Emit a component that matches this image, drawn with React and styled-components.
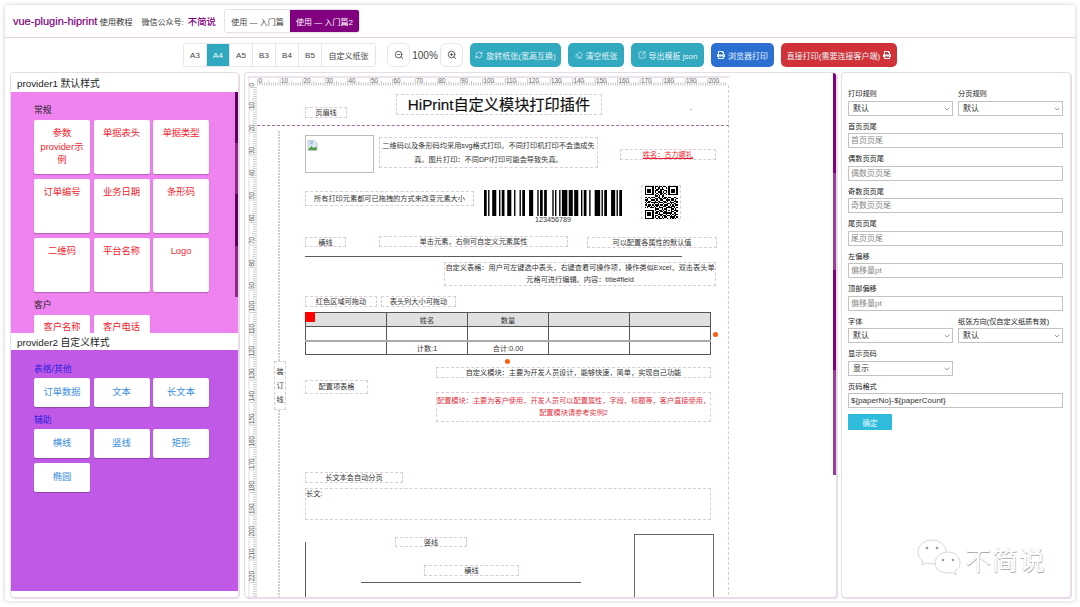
import styled, { createGlobalStyle, css } from "styled-components";
import { ZoomIn, ZoomOut, ChevronDown, SquareArrowOutUpRight, RefreshCw, Eraser } from "lucide-react";
import { FaPrint } from "react-icons/fa";

const FONT = `"Liberation Sans", "Noto Sans CJK SC", sans-serif`;
const PURPLE = "#800080";

const GlobalStyle = createGlobalStyle`
  html, body {
    margin: 0;
    background: #fff;
    font-family: ${FONT};
    color: #333;
  }
  * { box-sizing: border-box; }
`;

const Frame = styled.div`
  position: relative;
  width: 1070px;
  height: 596px;
  margin: 5px;
  background: #fff;
  border-radius: 4px;
  box-shadow: 0 0 4px rgba(0, 0, 0, 0.22);
  overflow: hidden;
`;

const Header = styled.header`
  height: 33px;
  display: flex;
  align-items: center;
  padding-left: 8px;
  border-bottom: 1px solid #e6cfe6;
  font-size: 8.3px;
`;

const Brand = styled.span`
  color: ${PURPLE};
  font-size: 11px;
  margin-right: 2px;
  -webkit-text-stroke: 0.2px ${PURPLE};
`;

const Account = styled.span`
  margin-left: 9px;
  font-size: 8px;
`;

const AccountName = styled.b`
  color: ${PURPLE};
  font-size: 9.4px;
  margin-left: 4px;
  font-weight: 500;
`;

const NavGroup = styled.div`
  display: flex;
  height: 24px;
  margin-left: 8px;
  border: 1px solid #e2e2e2;
  border-radius: 3px;
  overflow: hidden;
`;

const NavItem = styled.div`
  width: ${(p) => p.$w}px;
  display: flex;
  align-items: center;
  justify-content: center;
  font-size: 8px;
  color: ${(p) => (p.$active ? "#fff" : "#444")};
  background: ${(p) => (p.$active ? PURPLE : "#fff")};
`;

const Toolbar = styled.div`
  display: flex;
  align-items: center;
  height: 24px;
  margin-top: 5px;
  padding-left: 178px;
`;

const SizeGroup = styled.div`
  display: flex;
  height: 24px;
  border: 1px solid #e6e6e6;
  border-radius: 3px;
  margin-right: 11px;
`;

const SizeItem = styled.div`
  width: ${(p) => p.$w || 23}px;
  display: flex;
  align-items: center;
  justify-content: center;
  font-size: 8px;
  color: ${(p) => (p.$active ? "#fff" : "#444")};
  background: ${(p) => (p.$active ? "#2fa8c0" : "#fff")};
  border-right: 1px solid #e6e6e6;
  &:last-child { border-right: none; }
`;

const ZoomButton = styled.div`
  width: 23px;
  height: 24px;
  border: 1px solid #e6e6e6;
  border-radius: 6px;
  display: flex;
  align-items: center;
  justify-content: center;
  color: #444;
`;

const ZoomValue = styled.span`
  width: 30px;
  text-align: center;
  font-size: 10px;
  color: #444;
`;

const ActionButton = styled.div`
  width: ${(p) => p.$w}px;
  height: 24px;
  margin-left: 7px;
  border-radius: 5px;
  background: ${(p) => p.$bg};
  color: #e6f4f8;
  font-size: 8px;
  display: flex;
  align-items: center;
  justify-content: center;
  gap: 3px;
  white-space: nowrap;
`;

const Main = styled.main`
  display: flex;
  height: 524px;
  margin-top: 6px;
  padding-left: 6px;
`;

const panelFrame = css`
  height: 524px;
  border-radius: 3px;
  background: #fff;
  box-shadow: 0 0 0 1px #e4dee4, 1px 1px 0 1px #ecd9ee;
`;

const LeftPanel = styled.aside`
  ${panelFrame}
  width: 227px;
  display: flex;
  flex-direction: column;
  overflow: hidden;
  margin-right: 7px;
`;

const ProviderTitle = styled.div`
  height: ${(p) => p.$h}px;
  flex: none;
  display: flex;
  align-items: center;
  padding-left: 6px;
  font-size: 9.8px;
  color: #222;
  background: #fff;
`;

const ProviderBody = styled.div`
  position: relative;
  height: 241px;
  flex: none;
  overflow: hidden;
  padding: ${(p) => p.$top}px 0 0 23px;
  background: ${(p) => p.$bg};
`;

const PanelScroll = styled.div`
  position: absolute;
  top: 0;
  right: 0;
  width: 3px;
  height: 205px;
  background: linear-gradient(#5c005c 0 25%, #8a2a8a 25% 50%, #5c005c 50% 75%, #8a2a8a 75%);
`;

const GroupLabel = styled.div`
  height: 14px;
  line-height: 14px;
  font-size: 8.8px;
  color: ${(p) => p.$color};
  margin-bottom: ${(p) => p.$gap}px;
`;

const TileGrid = styled.div`
  display: grid;
  grid-template-columns: repeat(3, 56px);
  column-gap: 3.5px;
  row-gap: 5px;
  margin-bottom: 6px;
`;

const Tile = styled.div`
  height: ${(p) => p.$h}px;
  background: #fff;
  border-radius: 2px;
  box-shadow: 0 1px 1px rgba(0, 0, 0, 0.25);
  font-size: 9.3px;
  line-height: 13.6px;
  text-align: center;
  color: ${(p) => p.$color};
  padding: ${(p) => p.$pad}px 2px 0;
`;

const PanelFoot = styled.div`
  flex: 1;
  background: #fff;
`;

const CenterPanel = styled.section`
  ${panelFrame}
  position: relative;
  width: 591px;
  overflow: hidden;
  margin-right: 6px;
`;

const ScrollBar = styled.div`
  position: absolute;
  top: 0;
  right: 0;
  width: 3px;
  height: 402px;
  background: linear-gradient(${PURPLE} 0 25%, #96409a 25% 49%, ${PURPLE} 49% 74%, #96409a 74%);
`;

const RulerSvg = styled.svg`
  position: absolute;
  inset: 0;
  width: 591px;
  height: 524px;
`;

/* print elements sit on the paper by their own coordinates, given in page px */
const place = css`
  position: absolute;
  left: ${(p) => p.$x - 245}px;
  top: ${(p) => p.$y - 73}px;
  width: ${(p) => p.$w}px;
  height: ${(p) => p.$h}px;
`;

const PaperRight = styled.div`
  ${place}
  border-right: 1px dashed #d5c9d5;
`;

const HeaderLine = styled.div`
  ${place}
  border-top: 1px dashed #a06aa0;
`;

const BindLine = styled.div`
  ${place}
  background: repeating-linear-gradient(#cfcfcf 0 2px, #fff 2px 3px);
`;

const PrintItem = styled.div`
  ${place}
  border: 1px dashed #dccbdc;
  background: ${(p) => (p.$fill ? "#fff" : "transparent")};
  display: flex;
  flex-direction: column;
  align-items: ${(p) => (p.$start ? "flex-start" : "center")};
  justify-content: ${(p) => (p.$start ? "flex-start" : "center")};
  text-align: center;
  font-size: 7.2px;
  line-height: ${(p) => p.$lh || 9}px;
  white-space: nowrap;
  color: ${(p) => p.$color || "#333"};
  text-decoration: ${(p) => (p.$under ? "underline" : "none")};
`;

const PrintTitle = styled(PrintItem)`
  font-size: 15.2px;
  line-height: 20px;
  color: #111;
  -webkit-text-stroke: 0.2px #111;
`;

const ImageBox = styled.div`
  ${place}
  border: 1px solid #bbb;
  padding: 1px;
`;

const Solid = styled.div`
  ${place}
  background: #5c5c5c;
`;

const Outline = styled.div`
  ${place}
  border: 1px solid #666;
`;

const DrawBox = styled.svg`
  ${place}
`;

const BarLabel = styled.div`
  ${place}
  font-size: 7.2px;
  line-height: 8px;
  text-align: center;
  color: #333;
`;

const Dot = styled.i`
  ${place}
  border-radius: 50%;
  background: ${(p) => p.$bg};
`;

const GridTable = styled.table`
  ${place}
  border-collapse: collapse;
  table-layout: fixed;
  font-size: 7.2px;
  text-align: center;
  color: #333;
`;

const HeadCell = styled.th`
  height: 14px;
  padding: 0;
  font-weight: 400;
  background: #e0e0e0;
  border: 1px solid #555;
`;

const BodyCell = styled.td`
  height: 14px;
  padding: 0;
  border: 1px solid #555;
  border-top: ${(p) => (p.$split ? "2px solid #aaa" : "1px solid #555")};
`;

const DragHandle = styled.div`
  ${place}
  background: #f00;
`;

const RightPanel = styled.aside`
  ${panelFrame}
  width: 228px;
  padding: 15px 6px 0;
`;

const SettingsForm = styled.form`
  display: grid;
  grid-template-columns: 105px 105px;
  column-gap: 5px;
  row-gap: 5px;
`;

const Field = styled.label`
  display: block;
  grid-column: ${(p) => (p.$full ? "1 / -1" : "auto")};
`;

const FieldName = styled.div`
  height: 11px;
  line-height: 11px;
  margin-bottom: 1.5px;
  font-size: 7.2px;
  color: #222;
  white-space: nowrap;
`;

const controlStyle = css`
  display: block;
  width: 100%;
  height: 15px;
  border: 1px solid #c2c2c2;
  border-radius: 0;
  background: #fff;
  font-family: ${FONT};
  font-size: 8px;
  color: #333;
  outline: none;
`;

const TextInput = styled.input`
  ${controlStyle}
  padding: 0 2px;
  &::placeholder { color: #8a8a8a; opacity: 1; }
`;

const SelectWrap = styled.div`
  position: relative;
  svg {
    position: absolute;
    right: 2px;
    top: 4px;
    color: #666;
    pointer-events: none;
  }
`;

const Select = styled.select`
  ${controlStyle}
  appearance: none;
  padding: 0 0 0 4px;
`;

const SubmitButton = styled.button`
  grid-column: 1 / -1;
  width: 44px;
  height: 16px;
  margin-top: 1px;
  border: none;
  padding: 0;
  background: #2fbcdc;
  color: #e8fbff;
  font-family: ${FONT};
  font-size: 7.6px;
`;

const Watermark = styled.div`
  position: absolute;
  left: 912px;
  top: 534px;
  display: flex;
  align-items: center;
  gap: 2px;
`;

const WatermarkText = styled.span`
  font-size: 26px;
  letter-spacing: 1px;
  color: #fff;
  text-shadow: 0.5px 0.5px 0 #aeaeae, -0.3px -0.3px 0 #d0d0d0;
`;

const SIZES = ["A3", "A4", "A5", "B3", "B4", "B5"];

const COMMON = ["参数provider示例", "单据表头", "单据类型", "订单编号", "业务日期", "条形码", "二维码", "平台名称", "Logo"];

const TOP_TICKS = Array.from({ length: 209 }, (_, i) => i);
const LEFT_TICKS = Array.from({ length: 232 }, (_, i) => i);

function Ruler() {
  return (
    <RulerSvg viewBox="0 0 591 524">
      <rect x="3" y="3" width="481" height="2" fill="#ece4ec" />
      <rect x="3" y="5" width="2" height="519" fill="#f1ecf1" />
      {TOP_TICKS.map((i) => {
        const x = 12.7 + i * 2.25;
        const h = i % 10 === 0 ? 7 : i % 5 === 0 ? 4.5 : 3;
        return <line key={i} x1={x} x2={x} y1={12.5} y2={12.5 - h} stroke="#8c8c8c" strokeWidth="0.5" />;
      })}
      {TOP_TICKS.filter((i) => i % 10 === 0).map((i) => (
        <text key={i} x={13.4 + i * 2.25} y="9.5" fontSize="6.4" fill="#666" fontFamily={FONT}>
          {i}
        </text>
      ))}
      {LEFT_TICKS.map((i) => {
        const y = 14.5 + i * 2.25;
        const w = i % 10 === 0 ? 7 : i % 5 === 0 ? 5 : 4;
        return <line key={i} x1={12} x2={12 - w} y1={y} y2={y} stroke="#9a9a9a" strokeWidth="0.5" />;
      })}
      {LEFT_TICKS.filter((i) => i % 10 === 0 && i <= 220).map((i) => {
        const y = 13.6 + i * 2.25;
        return (
          <text key={i} x="0" y="0" transform={`translate(9 ${y}) rotate(-90)`} fontSize="6.4" fill="#666" fontFamily={FONT}>
            {i}
          </text>
        );
      })}
    </RulerSvg>
  );
}

// code 128 widths for 123456789
const BAR_WIDTHS = "211232" + "112232" + "131123" + "331121" + "241112" + "114131" + "321122" + "134111" + "2331112";

function Barcode() {
  let x = 0;
  const bars = [];
  BAR_WIDTHS.split("").forEach((c, i) => {
    const w = Number(c);
    if (i % 2 === 0) bars.push(<rect key={i} x={x} y="0" width={w} height="26" fill="#000" />);
    x += w;
  });
  return (
    <DrawBox $x={484} $y={190} $w={138} $h={26} viewBox={`0 0 ${x} 26`} preserveAspectRatio="none">
      {bars}
    </DrawBox>
  );
}

const QR_ROWS = [
  "1111111011011011001111111",
  "1000001010110100101000001",
  "1011101001101110001011101",
  "1011101011001001101011101",
  "1011101010111010101011101",
  "1000001001001101001000001",
  "1111111010101010101111111",
  "0000000011010110000000000",
  "1101011100110101101100110",
  "0010100011011011010011001",
  "1110011101001100111011010",
  "0101100010110011010100111",
  "1011011111011101100111001",
  "0100000100100010011010110",
  "1101101011101101110101011",
  "0011010101010011001011100",
  "1010111010011100111110101",
  "0000000011100101100011010",
  "1111111010011010101010111",
  "1000001001101101100011001",
  "1011101011010011111110110",
  "1011101000111100100101011",
  "1011101011001011011010110",
  "1000001010110101100111101",
  "1111111001011010010101010",
];

function QrCode() {
  return (
    <DrawBox $x={644} $y={186} $w={34} $h={33} viewBox="0 0 25 25" shapeRendering="crispEdges">
      {QR_ROWS.flatMap((row, y) =>
        row.split("").map((c, x) => (c === "1" ? <rect key={`${x}-${y}`} x={x} y={y} width="1" height="1" fill="#000" /> : null))
      )}
    </DrawBox>
  );
}

function BrokenImage() {
  return (
    <svg width="11" height="11" viewBox="0 0 11 11">
      <path d="M1 0.5h6l3 3v7H1z" fill="#dfe8f5" stroke="#a9a9a9" strokeWidth="0.6" />
      <path d="M1.5 9l3-3 2 2 3-1.5V10h-8z" fill="#4c9f3e" />
      <path d="M3 1.5h3v3H3z" fill="#9fc0ee" />
    </svg>
  );
}

function Bubbles() {
  return (
    <svg width="46" height="38" viewBox="0 0 46 38" fill="#fff" stroke="#c4c4c4" strokeWidth="0.7">
      <path d="M15 1C7 1 1 6 1 13c0 4 2 7 5 9l-1 4 5-2c2 .6 3 .8 5 .8 8 0 14-5 14-12S23 1 15 1z" />
      <path d="M31 13c-7 0-13 5-13 11s6 10 13 10c1.500 0 3-.2 4-.6l4 2.600-1-3.600c3-2 5-5 5-8.400 0-6-5-11-12-11z" />
      <g fill="#999" stroke="none">
        <circle cx="10" cy="9" r="1.300" />
        <circle cx="20" cy="9" r="1.300" />
        <circle cx="26" cy="21" r="1.200" />
        <circle cx="36" cy="21" r="1.200" />
      </g>
    </svg>
  );
}

function Paper() {
  return (
    <>
      <Ruler />
      <PaperRight $x={257} $y={85} $w={472} $h={520} />
      <HeaderLine $x={257} $y={125} $w={472} $h={1} />
      <BindLine $x={278} $y={131} $w={2} $h={470} />

      <PrintItem $x={305} $y={107} $w={42} $h={11}>页眉线</PrintItem>
      <PrintTitle $x={396} $y={94} $w={206} $h={21}>HiPrint自定义模块打印插件</PrintTitle>
      <Dot $x={690} $y={109} $w={2} $h={1} $bg="#aaa" />

      <ImageBox $x={305} $y={135} $w={69} $h={38}>
        <BrokenImage />
      </ImageBox>
      <PrintItem $x={379} $y={137} $w={219} $h={31} $lh={14}>
        <span>二维码以及条形码均采用svg格式打印。不同打印机打印不会造成失</span>
        <span>真。图片打印：不同DPI打印可能会导致失真。</span>
      </PrintItem>
      <PrintItem $x={620} $y={149} $w={96} $h={11} $color="#f01c2c" $under>姓名：古力娜扎</PrintItem>

      <PrintItem $x={305} $y={191} $w={169} $h={15}>所有打印元素都可已拖拽的方式来改变元素大小</PrintItem>
      <Barcode />
      <BarLabel $x={484} $y={216} $w={138} $h={8}>123456789</BarLabel>
      <PrintItem $x={641} $y={185} $w={40} $h={34} />
      <QrCode />

      <PrintItem $x={305} $y={237} $w={41} $h={10}>横线</PrintItem>
      <PrintItem $x={379} $y={236} $w={189} $h={11}>单击元素，右侧可自定义元素属性</PrintItem>
      <PrintItem $x={587} $y={237} $w={130} $h={11}>可以配置各属性的默认值</PrintItem>
      <Solid $x={305} $y={256} $w={377} $h={1} />

      <PrintItem $x={444} $y={262} $w={272} $h={24} $lh={12}>
        <span>自定义表格：用户可左键选中表头，右键查看可操作项，操作类似Excel，双击表头单</span>
        <span>元格可进行编辑。内容：title#field</span>
      </PrintItem>

      <PrintItem $x={305} $y={296} $w={72} $h={11}>红色区域可拖动</PrintItem>
      <PrintItem $x={381} $y={296} $w={75} $h={11}>表头列大小可拖动</PrintItem>

      <GridTable $x={305} $y={312} $w={406} $h={43}>
        <thead>
          <tr>
            <HeadCell />
            <HeadCell>姓名</HeadCell>
            <HeadCell>数量</HeadCell>
            <HeadCell />
            <HeadCell />
          </tr>
        </thead>
        <tbody>
          <tr>
            <BodyCell />
            <BodyCell />
            <BodyCell />
            <BodyCell />
            <BodyCell />
          </tr>
          <tr>
            <BodyCell $split />
            <BodyCell $split>计数:1</BodyCell>
            <BodyCell $split>合计:0.00</BodyCell>
            <BodyCell $split />
            <BodyCell $split />
          </tr>
        </tbody>
      </GridTable>
      <DragHandle $x={305} $y={312} $w={10} $h={10} />
      <Dot $x={713} $y={332} $w={5} $h={5} $bg="#ff5a10" />
      <Dot $x={505} $y={359} $w={5} $h={5} $bg="#ff5a10" />

      <PrintItem $x={274} $y={361} $w={12} $h={49} $lh={14} $fill>
        <span>装</span>
        <span>订</span>
        <span>线</span>
      </PrintItem>
      <PrintItem $x={436} $y={367} $w={275} $h={11}>自定义模块：主要为开发人员设计，能够快速，简单，实现自己功能</PrintItem>
      <PrintItem $x={305} $y={380} $w={63} $h={14} $lh={10}>配置项表格</PrintItem>
      <PrintItem $x={436} $y={392} $w={275} $h={30} $lh={12} $color="#e2333f">
        <span>配置模块：主要为客户使用，开发人员可以配置属性，字段，标题等，客户直接使用，</span>
        <span>配置模块请参考实例2</span>
      </PrintItem>

      <PrintItem $x={305} $y={472} $w={98} $h={11}>长文本会自动分页</PrintItem>
      <PrintItem $x={305} $y={488} $w={406} $h={32} $start>长文:</PrintItem>
      <PrintItem $x={395} $y={537} $w={72} $h={10}>竖线</PrintItem>
      <PrintItem $x={424} $y={565} $w={95} $h={11}>横线</PrintItem>
      <Solid $x={305} $y={542} $w={1} $h={60} />
      <Solid $x={361} $y={582} $w={220} $h={1} />
      <Outline $x={634} $y={534} $w={80} $h={75} />
    </>
  );
}

function Control({ options }) {
  return (
    <SelectWrap>
      <Select defaultValue={options[0]}>
        {options.map((o) => (
          <option key={o}>{o}</option>
        ))}
      </Select>
      <ChevronDown size={8} />
    </SelectWrap>
  );
}

function Settings() {
  const inputs = [
    ["首页页尾", "首页页尾"],
    ["偶数页页尾", "偶数页页尾"],
    ["奇数页页尾", "奇数页页尾"],
    ["尾页页尾", "尾页页尾"],
    ["左偏移", "偏移量pt"],
    ["顶部偏移", "偏移量pt"],
  ];
  return (
    <SettingsForm onSubmit={(e) => e.preventDefault()}>
      <Field>
        <FieldName>打印规则</FieldName>
        <Control options={["默认"]} />
      </Field>
      <Field>
        <FieldName>分页规则</FieldName>
        <Control options={["默认"]} />
      </Field>
      {inputs.map(([name, hint]) => (
        <Field $full key={name}>
          <FieldName>{name}</FieldName>
          <TextInput placeholder={hint} />
        </Field>
      ))}
      <Field>
        <FieldName>字体</FieldName>
        <Control options={["默认"]} />
      </Field>
      <Field>
        <FieldName>纸张方向(仅自定义纸质有效)</FieldName>
        <Control options={["默认"]} />
      </Field>
      <Field>
        <FieldName>显示页码</FieldName>
        <Control options={["显示"]} />
      </Field>
      <div />
      <Field $full>
        <FieldName>页码格式</FieldName>
        <TextInput defaultValue="${paperNo}-${paperCount}" />
      </Field>
      <SubmitButton>确定</SubmitButton>
    </SettingsForm>
  );
}

export default function App() {
  return (
    <>
      <GlobalStyle />
      <Frame>
        <Header>
          <Brand>vue-plugin-hiprint</Brand>
          <span>使用教程</span>
          <Account>微信公众号:</Account>
          <AccountName>不简说</AccountName>
          <NavGroup>
            <NavItem $w={65}>使用 — 入门篇</NavItem>
            <NavItem $w={69} $active>使用 — 入门篇2</NavItem>
          </NavGroup>
        </Header>

        <Toolbar>
          <SizeGroup>
            {SIZES.map((s) => (
              <SizeItem key={s} $active={s === "A4"}>{s}</SizeItem>
            ))}
            <SizeItem $w={53}>自定义纸张</SizeItem>
          </SizeGroup>
          <ZoomButton><ZoomOut size={10} /></ZoomButton>
          <ZoomValue>100%</ZoomValue>
          <ZoomButton><ZoomIn size={10} /></ZoomButton>
          <ActionButton $w={91} $bg="#31a9bf"><RefreshCw size={8} />旋转纸张(宽高互换)</ActionButton>
          <ActionButton $w={56} $bg="#31a9bf"><Eraser size={8} />清空纸张</ActionButton>
          <ActionButton $w={73} $bg="#31a9bf"><SquareArrowOutUpRight size={8} />导出模板 json</ActionButton>
          <ActionButton $w={63} $bg="#2b6fd0"><FaPrint size={8} />浏览器打印</ActionButton>
          <ActionButton $w={116} $bg="#d03238">直接打印(需要连接客户端)<FaPrint size={8} /></ActionButton>
        </Toolbar>

        <Main>
          <LeftPanel>
            <ProviderTitle $h={19}>provider1 默认样式</ProviderTitle>
            <ProviderBody $bg="#ee82ee" $top={11}>
              <GroupLabel $color="#222" $gap={3}>常规</GroupLabel>
              <TileGrid>
                {COMMON.map((t) => (
                  <Tile key={t} $h={54} $pad={7} $color="#f5222d">{t}</Tile>
                ))}
              </TileGrid>
              <GroupLabel $color="#222" $gap={3}>客户</GroupLabel>
              <TileGrid>
                <Tile $h={54} $pad={6} $color="#f5222d">客户名称</Tile>
                <Tile $h={54} $pad={6} $color="#f5222d">客户电话</Tile>
              </TileGrid>
              <PanelScroll />
            </ProviderBody>
            <ProviderTitle $h={17}>provider2 自定义样式</ProviderTitle>
            <ProviderBody $bg="#c05ae6" $top={12}>
              <GroupLabel $color="#2a1fe0" $gap={2}>表格/其他</GroupLabel>
              <TileGrid>
                {["订单数据", "文本", "长文本"].map((t) => (
                  <Tile key={t} $h={29} $pad={8} $color="#3a8ee0">{t}</Tile>
                ))}
              </TileGrid>
              <GroupLabel $color="#2a1fe0" $gap={2}>辅助</GroupLabel>
              <TileGrid>
                {["横线", "竖线", "矩形", "椭圆"].map((t) => (
                  <Tile key={t} $h={29} $pad={8} $color="#3a8ee0">{t}</Tile>
                ))}
              </TileGrid>
            </ProviderBody>
            <PanelFoot />
          </LeftPanel>

          <CenterPanel>
            <Paper />
            <ScrollBar />
          </CenterPanel>

          <RightPanel>
            <Settings />
          </RightPanel>
        </Main>

        <Watermark>
          <Bubbles />
          <WatermarkText>不简说</WatermarkText>
        </Watermark>
      </Frame>
    </>
  );
}
